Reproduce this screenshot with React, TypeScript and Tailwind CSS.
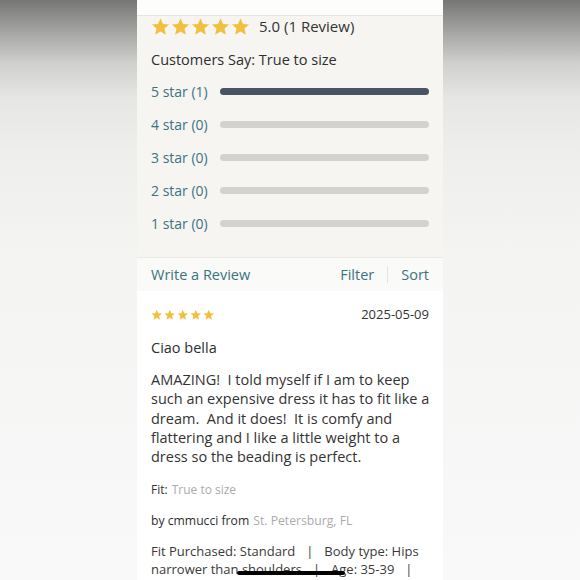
import React from "react";

const Star = ({ size }: { size: number }) => (
  <svg width={size} height={size} viewBox="0 0 24 24" className="shrink-0">
    <path
      d="M12 1.5l3.1 7.2 7.8.7-5.9 5.2 1.8 7.7L12 18.2l-6.8 4.1 1.8-7.7L1.1 9.4l7.8-.7z"
      fill="#f2c03c"
    />
  </svg>
);

const ratingRows = [
  { label: "5 star (1)", filled: true },
  { label: "4 star (0)", filled: false },
  { label: "3 star (0)", filled: false },
  { label: "2 star (0)", filled: false },
  { label: "1 star (0)", filled: false },
];

const Pipe = () => <span className="mx-[11px]">|</span>;

export default function App() {
  return (
    <div
      className="relative h-[580px] w-[580px] overflow-hidden flex justify-center bg-[linear-gradient(to_bottom,#767674_0%,#a9a9a7_6%,#d0d0ce_11%,#e6e6e4_17%,#eeeeec_26%,#f4f4f3_45%,#f9f9f9_100%)]"
      style={{ fontFamily: "'Open Sans', Lato, sans-serif" }}
    >
      <div className="w-[306px] flex flex-col bg-white text-[#333]">
        {/* top strip */}
        <div className="h-[16px] shrink-0 bg-[#fdfdfc] border-b border-[#e6e5e2]" />

        {/* summary */}
        <div className="bg-[#f6f5f2] px-[14px] pb-[17px] border-b border-[#ebeae7]">
          <div className="flex items-center h-[20px]">
            <div className="flex gap-[1px]">
              {Array.from({ length: 5 }).map((_, i) => (
                <Star key={i} size={19} />
              ))}
            </div>
            <span className="ml-[9px] text-[15px] text-[#333]">5.0 (1 Review)</span>
          </div>
          <div className="mt-[14px] h-[20px] flex items-center text-[14.5px] text-[#2e2e2e]">
            Customers Say: True to size
          </div>
          <div className="mt-[5px] flex flex-col">
            {ratingRows.map((row) => (
              <div key={row.label} className="h-[33px] flex items-center">
                <span className="w-[69px] text-[14px] text-[#3b7380]">{row.label}</span>
                <div
                  className={
                    row.filled
                      ? "flex-1 h-[7px] rounded-full bg-[#4a5363]"
                      : "flex-1 h-[7px] rounded-full bg-[#d2d2d1]"
                  }
                />
              </div>
            ))}
          </div>
        </div>

        {/* actions */}
        <div className="h-[33px] shrink-0 bg-[#fafaf8] px-[14px] flex items-center text-[14.5px] text-[#3b7380]">
          <span>Write a Review</span>
          <span className="ml-auto">Filter</span>
          <span className="mx-[13px] h-[17px] w-px bg-[#e4e4e2]" />
          <span>Sort</span>
        </div>

        {/* review */}
        <div className="px-[14px] pt-[16px] bg-white">
          <div className="flex items-center justify-between h-[16px]">
            <div className="flex gap-[1.5px]">
              {Array.from({ length: 5 }).map((_, i) => (
                <Star key={i} size={11.5} />
              ))}
            </div>
            <span className="text-[13px] text-[#333]">2025-05-09</span>
          </div>
          <div className="mt-[15px] h-[20px] flex items-center text-[14.5px] text-[#2e2e2e]">
            Ciao bella
          </div>
          <p className="mt-[12px] text-[14.5px] leading-[19.3px] text-[#333] whitespace-nowrap">
            AMAZING!&nbsp; I told myself if I am to keep
            <br />
            such an expensive dress it has to fit like a
            <br />
            dream.&nbsp; And it does!&nbsp; It is comfy and
            <br />
            flattering and I like a little weight to a
            <br />
            dress so the beading is perfect.
          </p>
          <div className="mt-[15px] h-[18px] flex items-center text-[12px]">
            <span className="text-[#333]">Fit:</span>
            <span className="ml-[4px] text-[#ababab]">True to size</span>
          </div>
          <div className="mt-[13px] h-[18px] flex items-center text-[12.2px]">
            <span className="text-[#2e2e2e]">by cmmucci from</span>
            <span className="ml-[4px] text-[#ababab]">St. Petersburg, FL</span>
          </div>
          <p className="mt-[13px] text-[13px] leading-[17.5px] text-[#3a3a3a] whitespace-nowrap">
            Fit Purchased: Standard
            <Pipe />
            Body type: Hips
            <br />
            narrower than shoulders
            <Pipe />
            Age: 35-39
            <Pipe />
          </p>
        </div>
      </div>

      {/* home indicator */}
      <div className="absolute bottom-[5px] left-[237px] w-[108px] h-[4px] rounded-full bg-black" />
    </div>
  );
}
